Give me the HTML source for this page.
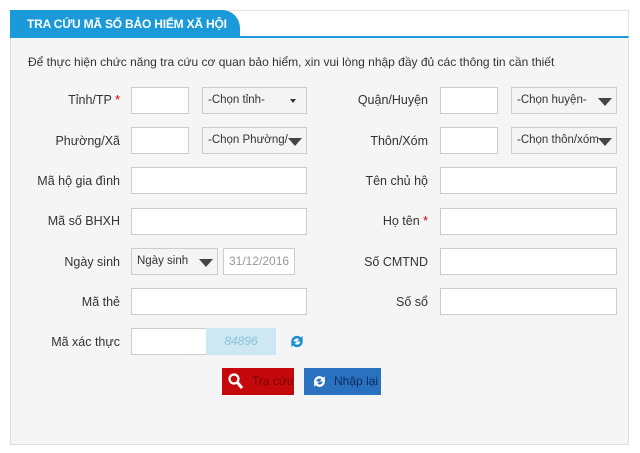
<!DOCTYPE html><html><head><meta charset="utf-8"><style>
body{margin:0;width:640px;height:453px;background:#fff;font-family:"Liberation Sans",sans-serif;font-size:12px;color:#333;position:relative;overflow:hidden}
.panel{position:absolute;left:10px;top:36px;width:619px;height:409px;background:#f5f5f5;border:1px solid #ddd;border-top:2px solid #1a9ad9;box-sizing:border-box}
.top{position:absolute;left:10px;top:10px;width:619px;height:27px;border:1px solid #e4e4e4;border-bottom:none;box-sizing:border-box;background:#fff}
.tab{position:absolute;left:10px;top:10px;width:230px;height:28px;background:#1a9ad9;border-top-right-radius:18px;color:#fff;font-weight:bold;font-size:12px;letter-spacing:-0.2px;line-height:28px;padding-left:17px;box-sizing:border-box;white-space:nowrap}
.a{position:absolute}
.lbl{position:absolute;text-align:right;font-size:12.5px;color:#333;white-space:nowrap}
.in{position:absolute;height:27px;background:#fff;border:1px solid #ccc;box-sizing:border-box}
.sel{position:absolute;height:27px;background:#f4f4f4;border:1px solid #ccc;box-sizing:border-box;font-size:11.5px;line-height:25px;padding-left:5px;white-space:nowrap;overflow:hidden}
.sel span{display:block;overflow:hidden}
.ar{position:absolute;right:4px;top:10px;width:0;height:0;border-left:7px solid transparent;border-right:7px solid transparent;border-top:8px solid #444}
.ars{position:absolute;right:10px;top:11px;border-left:3px solid transparent;border-right:3px solid transparent;border-top:4px solid #333}
.r{color:#c00}
</style></head><body>
<div class="top"></div>
<div class="panel"></div>
<div class="tab">TRA CỨU MÃ SỐ BẢO HIỂM XÃ HỘI</div>
<div class="a" style="left:28px;top:55px;font-size:12px">Để thực hiện chức năng tra cứu cơ quan bảo hiểm, xin vui lòng nhập đầy đủ các thông tin cần thiết</div>

<div class="lbl" style="right:520px;top:93px">Tỉnh/TP <span class="r">*</span></div>
<div class="in" style="left:131px;top:87px;width:58px"></div>
<div class="sel" style="left:202px;top:87px;width:105px"><span style="width:80px">-Chọn tỉnh-</span><div class="ars"></div></div>
<div class="lbl" style="right:212px;top:93px">Quận/Huyện</div>
<div class="in" style="left:440px;top:87px;width:58px"></div>
<div class="sel" style="left:511px;top:87px;width:106px"><span style="width:80px">-Chọn huyện-</span><div class="ar"></div></div>

<div class="lbl" style="right:520px;top:134px">Phường/Xã</div>
<div class="in" style="left:131px;top:127px;width:58px"></div>
<div class="sel" style="left:202px;top:127px;width:105px"><span style="width:80px">-Chọn Phường/xã</span><div class="ar"></div></div>
<div class="lbl" style="right:212px;top:134px">Thôn/Xóm</div>
<div class="in" style="left:440px;top:127px;width:58px"></div>
<div class="sel" style="left:511px;top:127px;width:106px"><span style="width:82px">-Chọn thôn/xóm</span><div class="ar"></div></div>

<div class="lbl" style="right:520px;top:174px">Mã hộ gia đình</div>
<div class="in" style="left:131px;top:167px;width:176px"></div>
<div class="lbl" style="right:212px;top:174px">Tên chủ hộ</div>
<div class="in" style="left:440px;top:167px;width:177px"></div>

<div class="lbl" style="right:520px;top:214px">Mã số BHXH</div>
<div class="in" style="left:131px;top:208px;width:176px"></div>
<div class="lbl" style="right:212px;top:214px">Họ tên <span class="r">*</span></div>
<div class="in" style="left:440px;top:208px;width:177px"></div>

<div class="lbl" style="right:520px;top:255px">Ngày sinh</div>
<div class="sel" style="left:131px;top:248px;width:87px"><span>Ngày sinh</span><div class="ar"></div></div>
<div class="in" style="left:223px;top:248px;width:72px;color:#999;padding-left:5px;line-height:25px">31/12/2016</div>
<div class="lbl" style="right:212px;top:255px">Số CMTND</div>
<div class="in" style="left:440px;top:248px;width:177px"></div>

<div class="lbl" style="right:520px;top:295px">Mã thẻ</div>
<div class="in" style="left:131px;top:288px;width:176px"></div>
<div class="lbl" style="right:212px;top:295px">Số sổ</div>
<div class="in" style="left:440px;top:288px;width:177px"></div>

<div class="lbl" style="right:520px;top:335px">Mã xác thực</div>
<div class="in" style="left:131px;top:328px;width:76px"></div>
<div class="a" style="left:206px;top:328px;width:70px;height:27px;background:#cde8f2;color:#8cc3da;font-style:italic;text-align:center;line-height:27px;font-size:12px">84896</div>
<svg class="a" style="left:288px;top:332px" width="18" height="19" viewBox="0 0 16 16"><path d="M3 9a5 5 0 0 1 8.5-4.5L13 3v5H8l2-2A3 3 0 0 0 5 8z" fill="#1a8ed0"/><path d="M13 7a5 5 0 0 1-8.5 4.5L3 13V8h5l-2 2a3 3 0 0 0 5-2z" fill="#1a8ed0"/></svg>

<div class="a" style="left:222px;top:368px;width:72px;height:27px;background:#c4080c;color:#7a0000;line-height:27px;font-size:12px"><svg style="position:absolute;left:6px;top:5px" width="16" height="17"><circle cx="6" cy="6" r="4.5" fill="none" stroke="#fff" stroke-width="2.2"/><path d="M9 9l5 6" stroke="#fff" stroke-width="3"/></svg><span style="position:absolute;left:30px">Tra cứu</span></div>
<div class="a" style="left:304px;top:368px;width:77px;height:27px;background:#2a72c0;color:#0c2b5c;line-height:27px;font-size:12px"><svg style="position:absolute;left:7px;top:5px" width="17" height="17" viewBox="0 0 16 16"><path d="M3 9a5 5 0 0 1 8.5-4.5L13 3v5H8l2-2A3 3 0 0 0 5 8z" fill="#fff"/><path d="M13 7a5 5 0 0 1-8.5 4.5L3 13V8h5l-2 2a3 3 0 0 0 5-2z" fill="#fff"/></svg><span style="position:absolute;left:30px">Nhập lại</span></div>
</body></html>
